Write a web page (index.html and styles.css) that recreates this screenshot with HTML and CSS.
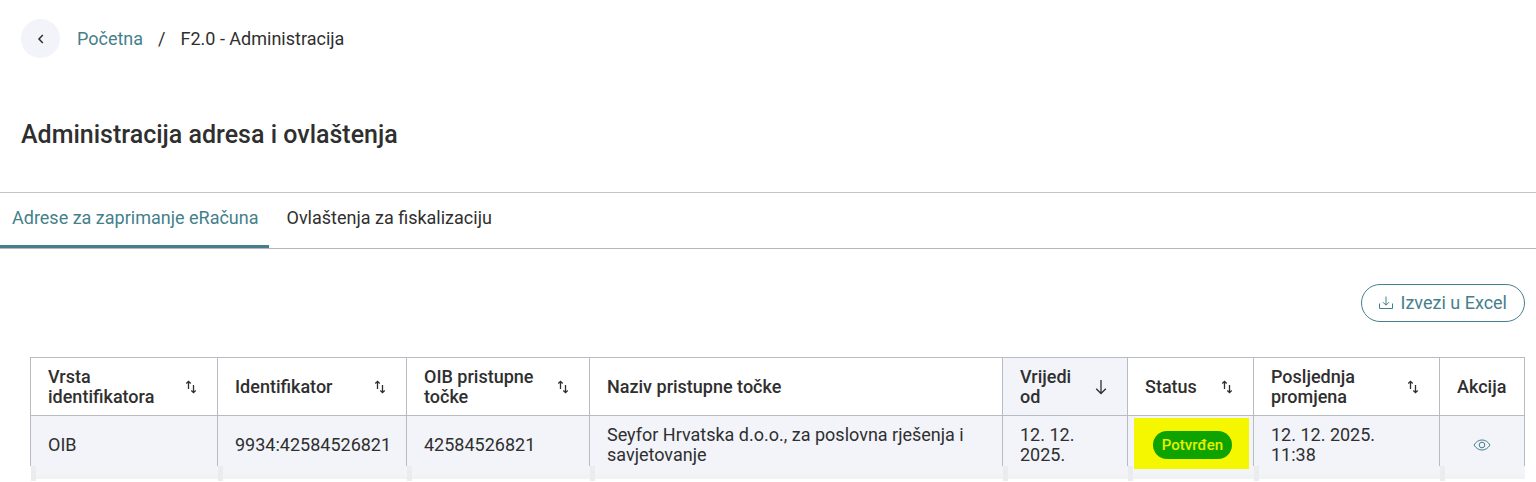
FILE: index.html
```html
<!DOCTYPE html>
<html lang="hr">
<head>
    <meta charset="UTF-8">
    <meta name="viewport" content="width=device-width, initial-scale=1.0">
    <title>F2.0 - Administracija</title>
    <link rel="stylesheet" href="styles.css">
</head>
<body>
    <!-- shared icons -->
    <svg class="sprite" aria-hidden="true">
        <symbol id="icon-sort" viewBox="0 0 12 16">
            <path d="M3.5 10V2.5M1.3 4.5L3.5 2.3L5.7 4.5M8.5 6V13.5M6.3 11.5L8.5 13.7L10.7 11.5"/>
        </symbol>
    </svg>

    <header>
        <nav class="breadcrumb" aria-label="Navigacija">
            <button class="back-button" type="button" aria-label="Natrag">
                <svg width="8" height="10" viewBox="0 0 8 10"><path d="M5.8 1L2 5L5.8 9"/></svg>
            </button>
            <a href="#">Početna</a>
            <span class="separator">/</span>
            <span>F2.0 - Administracija</span>
        </nav>
        <h1>Administracija adresa i ovlaštenja</h1>
    </header>

    <div class="tabs" role="tablist">
        <button class="tab active" type="button" role="tab" aria-selected="true">Adrese za zaprimanje eRačuna</button>
        <button class="tab" type="button" role="tab" aria-selected="false">Ovlaštenja za fiskalizaciju</button>
    </div>

    <main>
        <div class="toolbar">
            <button class="export-button" type="button">
                <svg width="14" height="14" viewBox="0 0 14 14"><path d="M7 0.5V9M4 6.2L7 9.2L10 6.2M0.5 7.5V12.5H13.5V7.5"/></svg>
                Izvezi u Excel
            </button>
        </div>

        <table class="address-table">
            <colgroup>
                <col class="col-type">
                <col class="col-id">
                <col class="col-oib">
                <col class="col-name">
                <col class="col-date">
                <col class="col-status">
                <col class="col-changed">
                <col class="col-action">
            </colgroup>
            <thead>
                <tr>
                    <th>
                        <div class="th-content">Vrsta identifikatora
                            <button type="button" aria-label="Sortiraj"><svg width="12" height="16"><use href="#icon-sort"/></svg></button>
                        </div>
                    </th>
                    <th>
                        <div class="th-content">Identifikator
                            <button type="button" aria-label="Sortiraj"><svg width="12" height="16"><use href="#icon-sort"/></svg></button>
                        </div>
                    </th>
                    <th>
                        <div class="th-content">OIB pristupne točke
                            <button type="button" aria-label="Sortiraj"><svg width="12" height="16"><use href="#icon-sort"/></svg></button>
                        </div>
                    </th>
                    <th>Naziv pristupne točke</th>
                    <th class="sorted" aria-sort="descending">
                        <div class="th-content">Vrijedi od
                            <button type="button" aria-label="Sortiraj"><svg width="12" height="16" viewBox="0 0 12 16"><path d="M6 1V14.5M1.2 9.7L6 14.5L10.8 9.7"/></svg></button>
                        </div>
                    </th>
                    <th>
                        <div class="th-content">Status
                            <button type="button" aria-label="Sortiraj"><svg width="12" height="16"><use href="#icon-sort"/></svg></button>
                        </div>
                    </th>
                    <th>
                        <div class="th-content">Posljednja promjena
                            <button type="button" aria-label="Sortiraj"><svg width="12" height="16"><use href="#icon-sort"/></svg></button>
                        </div>
                    </th>
                    <th>Akcija</th>
                </tr>
            </thead>
            <tbody>
                <tr>
                    <td>OIB</td>
                    <td>9934:42584526821</td>
                    <td>42584526821</td>
                    <td>Seyfor Hrvatska d.o.o., za poslovna rješenja i savjetovanje</td>
                    <td>12. 12. 2025.</td>
                    <td class="status-cell">
                        <div class="highlight"><span class="badge">Potvrđen</span></div>
                    </td>
                    <td>12. 12. 2025.<br>11:38</td>
                    <td class="action-cell">
                        <button type="button" aria-label="Pregled">
                            <svg width="18" height="12" viewBox="0 0 18 12"><path d="M1 6C5 -0.7 13 -0.7 17 6C13 12.7 5 12.7 1 6Z"/><circle cx="9" cy="6" r="2.8"/></svg>
                        </button>
                    </td>
                </tr>
                <!-- faded edge under the last row -->
                <tr class="fade-row" aria-hidden="true">
                    <td></td><td></td><td></td><td></td><td></td><td></td><td></td><td></td>
                </tr>
            </tbody>
        </table>
    </main>
</body>
</html>
```
FILE: styles.css
```css
body {
    font-family: Roboto, "Liberation Sans", sans-serif;
    font-size: 18px;
    line-height: 20px;
    color: #2f2f2f;
    background-color: white;
    margin: 0;
}
button {
    font: inherit;
    color: inherit;
    background: none;
    border: none;
    padding: 0;
    cursor: pointer;
}
svg {
    display: block;
    fill: none;
    stroke: currentColor;
}
.sprite {
    position: absolute;
    width: 0;
    height: 0;
}
header {
    padding: 19px 21px 41px;
}
.breadcrumb {
    display: flex;
    align-items: center;
}
.breadcrumb a {
    color: #457f8b;
    text-decoration: none;
}
.breadcrumb a:hover {
    text-decoration: underline;
}
.back-button {
    display: flex;
    align-items: center;
    justify-content: center;
    width: 39px;
    height: 39px;
    margin-right: 17px;
    border-radius: 50%;
    background-color: #f2f4fa;
}
.back-button svg {
    stroke-width: 1.5;
}
.separator {
    margin: 0 15px;
}
h1 {
    margin: 61px 0 0;
    font-size: 25px;
    line-height: 32px;
    font-weight: 500;
}

/* tabs */
.tabs {
    display: flex;
    height: 55px;
    border-top: 1px solid #c4c5c9;
    border-bottom: 1px solid #b4b8bc;
}
.tab {
    padding: 0 18px 2px;
    border-bottom: 3px solid transparent;
}
.tab.active {
    padding-left: 12px;
    padding-right: 10px;
    color: #457f8b;
    border-bottom-color: #457f8b;
}

main {
    padding: 35px 11px 0 30px;
}
.toolbar {
    display: flex;
    justify-content: flex-end;
    margin-bottom: 35px;
}
.export-button {
    display: flex;
    align-items: center;
    gap: 8px;
    height: 38px;
    padding: 0 17px;
    border: 1px solid #457f8b;
    border-radius: 19px;
    color: #457f8b;
}

/* table */
.address-table {
    width: 100%;
    table-layout: fixed;
    border-collapse: collapse;
}
.col-type { width: 187px; }
.col-id { width: 189px; }
.col-oib { width: 183px; }
.col-date { width: 125px; }
.col-status { width: 126px; }
.col-changed { width: 186px; }
.col-action { width: 85px; }
.address-table th,
.address-table td {
    border: 1px solid #b9bbc3;
    padding: 9px 14px 1px 17px;
    text-align: left;
}
.address-table th {
    height: 58px;
    padding: 1px 17px 0;
    box-sizing: border-box;
    font-weight: 500;
}
.address-table td {
    background-color: #f2f4fa;
    border-bottom: none;
}
.th-content {
    display: flex;
    align-items: center;
    justify-content: space-between;
    gap: 12px;
    padding-right: 3px;
}
.th-content svg {
    stroke-width: 1.3;
}
.address-table th.sorted {
    background-color: #f2f4fa;
}
.address-table .status-cell {
    position: relative;
}
/* marker over the status, slightly taller than the row */
.highlight {
    position: absolute;
    top: 2px;
    left: 6px;
    right: 4px;
    height: 51px;
    box-sizing: border-box;
    padding: 2px 0 0 2px;
    display: flex;
    align-items: center;
    justify-content: center;
    background-color: #f5f700;
}
.badge {
    padding: 0 9px;
    border-radius: 14px;
    font-size: 15px;
    font-weight: 500;
    line-height: 28px;
    color: #e6f000;
    background-color: #0fa300;
}
.address-table .action-cell {
    padding-right: 17px;
}
.action-cell button {
    display: block;
    margin: 0 auto;
    color: #457f8b;
}
.address-table .fade-row td {
    height: 15px;
    padding: 0;
    border: none;
    background: linear-gradient(to right, #ebecee 5px, transparent 5px),
        linear-gradient(to bottom, #f3f4f8 9px, #f1f2f4 9px, #f1f2f4 13px, white 13px);
}
```
